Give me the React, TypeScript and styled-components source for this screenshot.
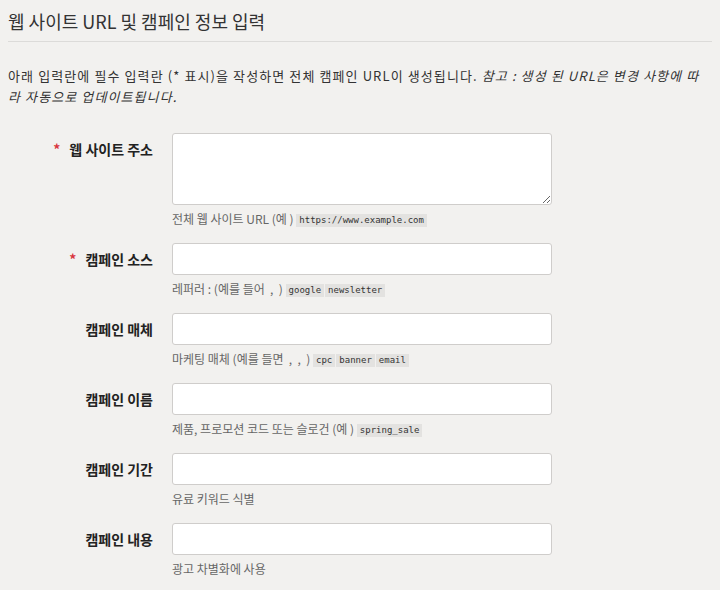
import React from "react";
import styled, { createGlobalStyle } from "styled-components";

const GlobalStyle = createGlobalStyle`
  html, body {
    background: #f2f1ef;
  }
  body {
    margin: 8px;
    font-family: "Noto Sans CJK KR", "Noto Sans", sans-serif;
    color: #333;
  }
`;

const Title = styled.h2`
  margin: 0;
  font-size: 18px;
  font-weight: 400;
  line-height: 27px;
  color: #333;
  padding-bottom: 6px;
  border-bottom: 1px solid #dcdbd9;
`;

const Intro = styled.p`
  margin: 23px 0 0;
  max-width: 702px;
  font-size: 13px;
  line-height: 21px;
  letter-spacing: 1.1px;
  color: #333;
`;

const Form = styled.form`
  margin-top: 26px;
  display: grid;
  grid-template-columns: 145px 380px;
  column-gap: 19px;
  row-gap: 15px;
`;

const Label = styled.label`
  height: 32px;
  display: flex;
  align-items: center;
  justify-content: flex-end;
  font-size: 14px;
  font-weight: 700;
  color: #222;
`;

const Star = styled.span`
  color: #d9363e;
  margin-right: 9px;
  font-weight: 700;
`;

const Field = styled.div`
  display: flex;
  flex-direction: column;
`;

const TextInput = styled.input`
  box-sizing: border-box;
  width: 380px;
  height: 32px;
  margin: 0;
  border: 1px solid #cfcdcb;
  border-radius: 3px;
  background: #fff;
  padding: 4px 8px;
  font: inherit;
  outline: none;
`;

const TextArea = styled.textarea`
  box-sizing: border-box;
  width: 380px;
  height: 72px;
  margin: 0;
  border: 1px solid #cfcdcb;
  border-radius: 3px;
  background: #fff;
  padding: 4px 8px;
  font: inherit;
  outline: none;
  display: block;
`;

const Help = styled.div`
  margin-top: 5px;
  height: 18px;
  font-size: 12px;
  line-height: 18px;
  color: #666;
  white-space: pre;
`;

const Code = styled.code`
  display: inline-block;
  font-family: "DejaVu Sans Mono", "Liberation Mono", monospace;
  font-size: 9px;
  line-height: 13px;
  vertical-align: 1px;
  background: #e3e2e0;
  color: #333;
  padding: 0 3px;
  margin-right: 1px;
`;

type Row = {
  label: string;
  required?: boolean;
  multiline?: boolean;
  help: string;
  codes?: string[];
};

const rows: Row[] = [
  { label: "웹 사이트 주소", required: true, multiline: true, help: "전체 웹 사이트 URL (예 ) ", codes: ["https://www.example.com"] },
  { label: "캠페인 소스", required: true, help: "레퍼러 : (예를 들어  ,  ) ", codes: ["google", "newsletter"] },
  { label: "캠페인 매체", help: "마케팅 매체 (예를 들면  ,  ,  ) ", codes: ["cpc", "banner", "email"] },
  { label: "캠페인 이름", help: "제품, 프로모션 코드 또는 슬로건 (예 ) ", codes: ["spring_sale"] },
  { label: "캠페인 기간", help: "유료 키워드 식별" },
  { label: "캠페인 내용", help: "광고 차별화에 사용" },
];

export default function App() {
  return (
    <>
      <GlobalStyle />
      <Title>웹 사이트 URL 및 캠페인 정보 입력</Title>
      <Intro>
        아래 입력란에 필수 입력란 (* 표시)을 작성하면 전체 캠페인 URL이 생성됩니다.{" "}
        <em>참고 : 생성 된 URL은 변경 사항에 따라 자동으로 업데이트됩니다.</em>
      </Intro>
      <Form onSubmit={(e) => e.preventDefault()}>
        {rows.map((r) => (
          <React.Fragment key={r.label}>
            <Label>
              {r.required && <Star>*</Star>}
              {r.label}
            </Label>
            <Field>
              {r.multiline ? <TextArea /> : <TextInput type="text" />}
              <Help>
                {r.help}
                {r.codes?.map((c) => (
                  <Code key={c}>{c}</Code>
                ))}
              </Help>
            </Field>
          </React.Fragment>
        ))}
      </Form>
    </>
  );
}
